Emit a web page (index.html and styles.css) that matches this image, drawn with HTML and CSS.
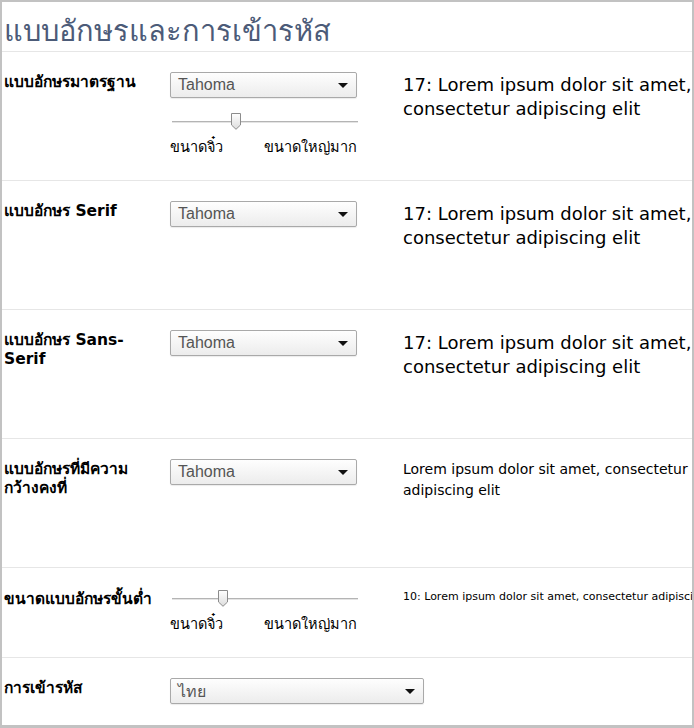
FILE: index.html
```html
<!DOCTYPE html>
<html lang="th">
<head>
<meta charset="utf-8">
<title>แบบอักษรและการเข้ารหัส</title>
<link rel="stylesheet" href="styles.css">
</head>
<body>
<div class="frame">
  <h1 class="title">แบบอักษรและการเข้ารหัส</h1>

  <section class="row">
    <div class="label">แบบอักษรมาตรฐาน</div>
    <div class="controls">
      <div class="select"><span>Tahoma</span><i class="arrow"></i></div>
      <div class="slider">
        <div class="track"></div>
        <svg class="thumb thumb-std" width="10" height="17" viewBox="0 0 10 17"><defs><linearGradient id="g1" x1="0" y1="0" x2="0" y2="1"><stop offset="0" stop-color="#ffffff"/><stop offset="1" stop-color="#dcdcdc"/></linearGradient></defs><path d="M0.5 0.5 H9.5 V12 L5 16.3 L0.5 12 Z" fill="url(#g1)" stroke="#8c8c8c"/></svg>
      </div>
      <div class="scale"><span>ขนาดจิ๋ว</span><span>ขนาดใหญ่มาก</span></div>
    </div>
    <div class="sample sample-lg">17: Lorem ipsum dolor sit amet,<br>consectetur adipiscing elit</div>
  </section>

  <section class="row">
    <div class="label">แบบอักษร Serif</div>
    <div class="controls">
      <div class="select"><span>Tahoma</span><i class="arrow"></i></div>
    </div>
    <div class="sample sample-lg">17: Lorem ipsum dolor sit amet,<br>consectetur adipiscing elit</div>
  </section>

  <section class="row">
    <div class="label">แบบอักษร Sans-Serif</div>
    <div class="controls">
      <div class="select"><span>Tahoma</span><i class="arrow"></i></div>
    </div>
    <div class="sample sample-lg">17: Lorem ipsum dolor sit amet,<br>consectetur adipiscing elit</div>
  </section>

  <section class="row">
    <div class="label">แบบอักษรที่มีความ กว้างคงที่</div>
    <div class="controls">
      <div class="select"><span>Tahoma</span><i class="arrow"></i></div>
    </div>
    <div class="sample sample-md">Lorem ipsum dolor sit amet, consectetur<br>adipiscing elit</div>
  </section>

  <section class="row row-min">
    <div class="label label-min">ขนาดแบบอักษรขั้นต่ำ</div>
    <div class="controls">
      <div class="slider slider-min">
        <div class="track"></div>
        <svg class="thumb thumb-min" width="10" height="17" viewBox="0 0 10 17"><defs><linearGradient id="g2" x1="0" y1="0" x2="0" y2="1"><stop offset="0" stop-color="#ffffff"/><stop offset="1" stop-color="#dcdcdc"/></linearGradient></defs><path d="M0.5 0.5 H9.5 V12 L5 16.3 L0.5 12 Z" fill="url(#g2)" stroke="#8c8c8c"/></svg>
      </div>
      <div class="scale"><span>ขนาดจิ๋ว</span><span>ขนาดใหญ่มาก</span></div>
    </div>
    <div class="sample sample-sm">10: Lorem ipsum dolor sit amet, consectetur adipiscing elit</div>
  </section>

  <section class="row row-enc">
    <div class="label">การเข้ารหัส</div>
    <div class="controls">
      <div class="select select-wide"><span>ไทย</span><i class="arrow"></i></div>
    </div>
  </section>
</div>
</body>
</html>
```

FILE: styles.css
```css
html, body {
  margin: 0;
  padding: 0;
  background: #ffffff;
}

.frame {
  box-sizing: border-box;
  width: 694px;
  height: 728px;
  border: 2px solid #c2c2c2;
  border-bottom-width: 3px;
  overflow: hidden;
  font-family: "DejaVu Sans", "Noto Sans", sans-serif;
  color: #000;
}

.title {
  margin: 0;
  height: 50px;
  box-sizing: border-box;
  padding: 12px 0 0 2px;
  font-size: 29px;
  line-height: 34px;
  font-weight: normal;
  color: #4c5b78;
  border-bottom: 1px solid #e6e6e6;
  white-space: nowrap;
}

.row {
  display: grid;
  grid-template-columns: 155px 11px 233px 1fr;
  height: 129px;
  box-sizing: border-box;
  padding: 20px 0 0 2px;
  border-bottom: 1px solid #e6e6e6;
}

.row > .label { grid-column: 1; }
.row > .controls { grid-column: 3; }
.row > .sample { grid-column: 4; min-width: 0; }

.row-min {
  height: 90px;
  padding-top: 21px;
}

.row-enc {
  border-bottom: none;
}

.label {
  font-size: 15.5px;
  font-weight: bold;
  line-height: 19px;
  padding-top: 1px;
}

.controls {
  display: flex;
  flex-direction: column;
}

.select {
  box-sizing: border-box;
  width: 187px;
  height: 26px;
  display: flex;
  align-items: center;
  justify-content: space-between;
  padding: 0 8px 0 7px;
  border: 1px solid #a9a9a9;
  border-radius: 2px;
  background: linear-gradient(#fefefe, #ececec);
  box-shadow: 0 1px 1px rgba(0,0,0,0.08);
  font-family: "Liberation Sans", Arial, sans-serif;
  font-size: 16px;
  color: #555;
}

.select-wide {
  width: 254px;
}

.arrow {
  width: 0;
  height: 0;
  border-left: 5px solid transparent;
  border-right: 5px solid transparent;
  border-top: 5px solid #111;
}

.slider {
  position: relative;
  height: 20px;
  margin-top: 14px;
}

.slider-min {
  margin-top: 0;
}

.track {
  margin: 9px 0 0 2px;
  width: 186px;
  height: 1px;
  background: #b4b4b4;
  box-shadow: 0 1px 0 #e4e4e4;
}

.thumb {
  position: absolute;
  top: 1px;
}

.thumb-std { left: 61px; }
.thumb-min { left: 48px; }

.scale {
  display: flex;
  justify-content: space-between;
  margin-top: 5px;
  font-size: 14.5px;
  line-height: 20px;
  width: 187px;
}

.sample {
  white-space: nowrap;
  overflow: hidden;
}

.sample-lg {
  font-size: 18px;
  line-height: 24px;
  padding-top: 1px;
}

.sample-md {
  font-size: 14px;
  line-height: 21px;
  padding-top: 0;
}

.sample-sm {
  font-size: 11px;
  line-height: 14px;
  padding-top: 1px;
}
```
